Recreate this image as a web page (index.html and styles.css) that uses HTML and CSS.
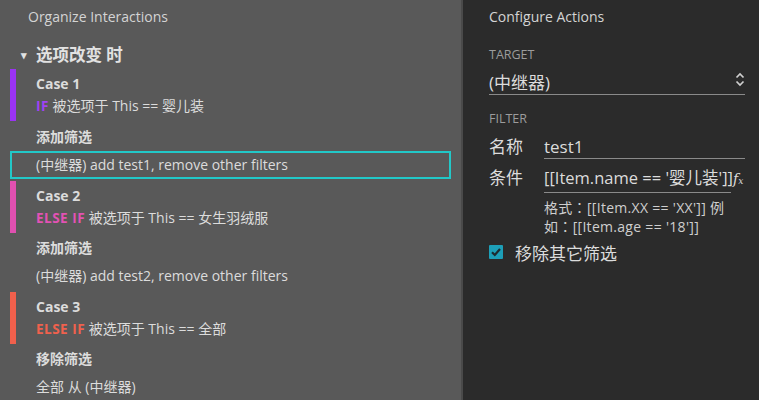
FILE: index.html
```html
<!DOCTYPE html>
<html>
<head>
<meta charset="utf-8">
<link rel="stylesheet" href="styles.css">
</head>
<body>
<div class="app">
  <div class="left">
    <div class="title">Organize Interactions</div>
    <div class="event"><span class="caret">▾</span>选项改变 时</div>

    <div class="case case-purple">
      <div class="case-name">Case 1</div>
      <div class="cond"><span class="kw kw-purple">IF</span> 被选项于 This == 婴儿装</div>
    </div>
    <div class="act-title first">添加筛选</div>
    <div class="act selected">(中继器) add test1, remove other filters</div>

    <div class="case case-pink">
      <div class="case-name">Case 2</div>
      <div class="cond"><span class="kw kw-pink">ELSE IF</span> 被选项于 This == 女生羽绒服</div>
    </div>
    <div class="act-title">添加筛选</div>
    <div class="act">(中继器) add test2, remove other filters</div>

    <div class="case case-orange">
      <div class="case-name">Case 3</div>
      <div class="cond"><span class="kw kw-orange">ELSE IF</span> 被选项于 This == 全部</div>
    </div>
    <div class="act-title">移除筛选</div>
    <div class="act">全部 从 (中继器)</div>
  </div>

  <div class="divider"></div>

  <div class="right">
    <div class="title">Configure Actions</div>
    <div class="section">TARGET</div>
    <div class="select">
      <span>(中继器)</span>
      <svg class="chev" width="10" height="15" viewBox="0 0 10 15"><path d="M1.5 5.5 L5 2 L8.5 5.5 M1.5 9.5 L5 13 L8.5 9.5" fill="none" stroke="#d0d0d0" stroke-width="1.7"/></svg>
    </div>
    <div class="section sec2">FILTER</div>
    <div class="field">
      <div class="label">名称</div>
      <div class="input">test1</div>
    </div>
    <div class="field f2">
      <div class="label">条件</div>
      <div class="input cond-input"><span class="val">[[Item.name == '婴儿装']]</span><span class="fx">f<sub>x</sub></span></div>
    </div>
    <div class="hint">格式<span class="colon">：</span>[[Item.XX == 'XX']] 例<br>如<span class="colon">：</span>[[Item.age == '18']]</div>
    <div class="check">
      <span class="box"><svg width="14" height="14" viewBox="0 0 14 14"><path d="M3 7.2 L5.8 10 L11 4" fill="none" stroke="#1d2b30" stroke-width="2.2"/></svg></span>
      <span>移除其它筛选</span>
    </div>
  </div>
</div>
</body>
</html>
```
FILE: styles.css
```css
html, body {
  margin: 0;
  padding: 0;
}
body {
  font-family: "Open Sans", "Noto Sans CJK SC", sans-serif;
  color: #dcdcdc;
  background: #2c2c2c;
}
.app {
  display: flex;
  width: 759px;
  height: 400px;
  overflow: hidden;
}
.left {
  width: 461px;
  background: #595959;
  display: flex;
  flex-direction: column;
  flex-shrink: 0;
}
.divider {
  width: 2px;
  background: #4a4a4a;
  flex-shrink: 0;
}
.right {
  flex: 1;
  background: #2b2b2b;
  padding-left: 26px;
  padding-right: 14px;
  display: flex;
  flex-direction: column;
}
.title {
  font-size: 14px;
  line-height: 20px;
  margin-top: 7px;
  color: #d4d4d4;
}
.left .title {
  padding-left: 28px;
}
.event {
  font-size: 16.5px;
  font-weight: bold;
  line-height: 22px;
  margin-top: 17px;
  padding-left: 21px;
  color: #e2e2e2;
}
.caret {
  font-size: 11px;
  display: inline-block;
  width: 15px;
  vertical-align: 2px;
}
.case {
  margin-left: 10px;
  border-left: 6px solid;
  padding: 4px 0 4px 20px;
}
.case-purple { border-color: #9a33f2; margin-top: 3px; }
.case-pink { border-color: #e050b0; margin-top: 2px; }
.case-orange { border-color: #f0604c; margin-top: 2px; }
.case-name {
  font-size: 14px;
  font-weight: bold;
  line-height: 22px;
}
.cond {
  font-size: 14px;
  line-height: 22px;
}
.kw {
  font-weight: bold;
  font-size: 13.5px;
  letter-spacing: 0.5px;
}
.kw-purple { color: #9f42f5; }
.kw-pink { color: #e252b4; }
.kw-orange { color: #f0614d; }
.act-title {
  font-size: 14px;
  font-weight: bold;
  line-height: 22px;
  padding-left: 36px;
  margin-top: 4px;
}
.act-title.first {
  margin-top: 5px;
}
.act {
  margin: 3px 10px 0 10px;
  border: 2px solid transparent;
  height: 24px;
  line-height: 24px;
  font-size: 14px;
  padding-left: 24px;
  white-space: nowrap;
}
.act.selected {
  border-color: #22c8c8;
}
.section {
  font-size: 12.5px;
  line-height: 16px;
  margin-top: 20px;
  color: #9c9c9c;
}
.sec2 {
  margin-top: 16px;
}
.select {
  display: flex;
  justify-content: space-between;
  align-items: center;
  margin-top: 5px;
  height: 26px;
  font-size: 17px;
  border-bottom: 1px solid #8a8a8a;
}
.chev {
  margin-top: -4px;
}
.field {
  display: flex;
  margin-top: 9px;
  font-size: 17px;
}
.f2 {
  margin-top: 8px;
}
.label {
  width: 55px;
  line-height: 22px;
}
.input {
  flex: 1;
  line-height: 22px;
  border-bottom: 1px solid #8a8a8a;
  white-space: nowrap;
}
.cond-input {
  flex: none;
  width: 187px;
}
.val {
  font-size: 16.5px;
}
.fx {
  font-family: "DejaVu Serif", serif;
  font-style: italic;
  font-size: 14px;
}
.fx sub {
  font-size: 9px;
  vertical-align: 0;
}
.hint {
  margin-left: 55px;
  margin-top: 5px;
  font-size: 14px;
  line-height: 18px;
  color: #cfcfcf;
  letter-spacing: 0.3px;
}
.colon {
  font-family: "Noto Sans CJK TC", sans-serif;
}
.check {
  display: flex;
  align-items: center;
  margin-top: 6px;
  height: 20px;
  font-size: 17px;
  gap: 12px;
}
.box {
  width: 14px;
  height: 14px;
  background: #1d9fb8;
  border-radius: 1px;
  display: flex;
}
```
